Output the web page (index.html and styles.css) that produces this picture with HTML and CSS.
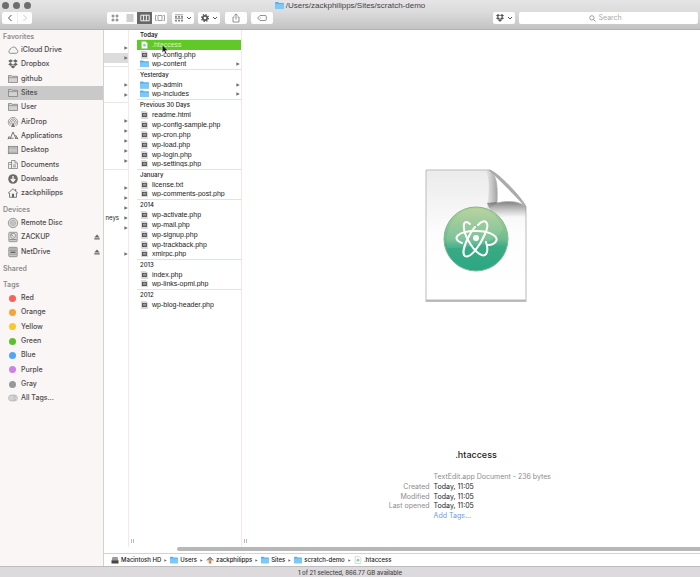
FILE: index.html
```
<!DOCTYPE html>
<html lang="en">
<head>
<meta charset="utf-8">
<title>/Users/zackphilipps/Sites/scratch-demo</title>
<link rel="stylesheet" href="styles.css">
</head>
<body>
<svg class="defs" aria-hidden="true">
  <defs>
    <linearGradient id="g-orb" x1="0" y1="0" x2="0" y2="1"><stop offset="0" stop-color="#b4cf94"/><stop offset=".5" stop-color="#6fbd8e"/><stop offset=".62" stop-color="#3aaa84"/><stop offset="1" stop-color="#2aa783"/></linearGradient>
    <linearGradient id="g-page" x1="0" y1="0" x2="0" y2="1"><stop offset="0" stop-color="#ebebeb"/><stop offset=".5" stop-color="#fdfdfd"/><stop offset="1" stop-color="#fff"/></linearGradient>
    <linearGradient id="g-side" x1="0" y1="0" x2="1" y2="0"><stop offset="0" stop-color="#999" stop-opacity="0"/><stop offset="1" stop-color="#8a8a8a" stop-opacity=".75"/></linearGradient>
    <linearGradient id="g-under" x1="0" y1="0" x2="0" y2="1"><stop offset="0" stop-color="#6e6e6e" stop-opacity=".9"/><stop offset="1" stop-color="#999" stop-opacity="0"/></linearGradient>
    <clipPath id="c-page"><path d="M1 1H64L101 38V131H1Z"/></clipPath>
  </defs>
  <symbol id="folder" viewBox="0 0 10 8"><path d="M0 .6Q0 0 .6 0H3.4L4.4 1H9.4Q10 1 10 1.6V7.4Q10 8 9.4 8H.6Q0 8 0 7.4Z" fill="#55b0ea"/><path d="M0 2.2H10V7.4Q10 8 9.4 8H.6Q0 8 0 7.4Z" fill="#7cc8f8"/></symbol>
  <symbol id="file" viewBox="0 0 8 9"><path d="M.5.5H5.5L7.5 2.500V8.500H.5Z" fill="#fff" stroke="#bbb" stroke-width=".7"/><rect x="1.200" y="2" width="5.500" height="5" fill="#555"/><circle cx="4" cy="4.500" r="1.300" fill="#ddd"/><circle cx="4" cy="4.500" r=".6" fill="#222"/></symbol>
  <symbol id="atomfile" viewBox="0 0 8 9"><path d="M.8.5H5.400L7.200 2.500V8.500H.8Z" fill="#fff" stroke="#c4c4c4" stroke-width=".7"/><circle cx="4" cy="4.800" r="1.600" fill="#8fd0b2"/></symbol>
  <symbol id="cloud" viewBox="0 0 12 12"><path d="M3.200 9.300H9.200A1.900 1.900 0 0 0 9.600 5.600A3 3 0 0 0 4 4.500A1.700 1.700 0 0 0 2.700 6.100A1.700 1.700 0 0 0 3.200 9.300Z" fill="#f4f4f4" stroke="#777" stroke-width=".8"/></symbol>
  <symbol id="dropbox" viewBox="0 0 12 12"><path d="M3.800 1.300L6 3 3.300 4.700 1.200 3ZM8.200 1.300L10.800 3 8.700 4.700 6 3ZM3.300 4.700L6 6.400 3.800 8.100 1.200 6.400ZM8.700 4.700L10.800 6.400 8.200 8.100 6 6.400ZM3.600 8.700L6 7.200 8.400 8.700 6 10.500Z"/></symbol>
  <symbol id="gfolder" viewBox="0 0 12 12"><path d="M1.500 2.500H4.500L5.300 3.300H10.500V9.500H1.500Z" fill="#d2d2d2" stroke="#777" stroke-width=".7"/><path d="M1.500 4.600H10.500" stroke="#777" stroke-width=".6"/></symbol>
  <symbol id="airdrop" viewBox="0 0 12 12"><g fill="none" stroke="#777" stroke-width=".7"><path d="M3.300 10A4.700 4.700 0 1 1 8.700 10M4 8.700A3.200 3.200 0 1 1 8 8.700M4.800 7.500A1.700 1.700 0 1 1 7.200 7.500"/></g><path d="M6 6L8 11H4Z" fill="#777"/></symbol>
  <symbol id="apps" viewBox="0 0 12 12"><path d="M3 9L6 2 9 9M1 8.200H6.500M8.200 8.200H11M2.200 6.200L1 9.200M8.500 5L11 9.200" fill="none" stroke="#666" stroke-width=".9"/></symbol>
  <symbol id="desktop" viewBox="0 0 12 12"><rect x="1.300" y="2.300" width="9.400" height="7.400" fill="#c6c6c6" stroke="#777" stroke-width=".7"/><path d="M2 4H10M2 8.300H10" stroke="#888" stroke-width=".7" stroke-dasharray="1 .6"/></symbol>
  <symbol id="docs" viewBox="0 0 12 12"><g fill="#eee" stroke="#777" stroke-width=".7"><path d="M1.500 3.500H5V9.500H1.500Z"/><path d="M4.500 1.500H8L10.500 4V9.500H4.500Z"/><path d="M8 1.500V4H10.500M6 6H9M6 7.700H9M2.500 5.500H4"/></g></symbol>
  <symbol id="down" viewBox="0 0 12 12"><circle cx="6" cy="6" r="4.800" fill="#6b6b6b"/><path d="M6 3V8M3.800 6L6 8.500 8.200 6" fill="none" stroke="#fff" stroke-width="1.300"/></symbol>
  <symbol id="home" viewBox="0 0 12 12"><path d="M2.500 6V10.300H9.500V6" fill="#eee" stroke="#666" stroke-width=".8"/><path d="M1 6.300L6 1.700 11 6.300M8.700 4V2" fill="none" stroke="#666" stroke-width=".9"/><rect x="5" y="6.800" width="2" height="3.500" fill="#666"/></symbol>
  <symbol id="disc" viewBox="0 0 12 12"><circle cx="6" cy="6" r="4.700" fill="#ddd" stroke="#777" stroke-width=".7"/><circle cx="6" cy="6" r="2.700" fill="none" stroke="#999" stroke-width=".6"/><circle cx="6" cy="6" r="1.200" fill="#fff" stroke="#777" stroke-width=".6"/></symbol>
  <symbol id="drive" viewBox="0 0 12 12"><rect x="1.800" y="1.300" width="8.400" height="9.400" rx=".8" fill="#ddd" stroke="#777" stroke-width=".7"/><circle cx="6" cy="4.800" r="2.500" fill="#eee" stroke="#777" stroke-width=".7"/><path d="M3.500 3L6.500 5.500M2.500 8.700H9.500" stroke="#666" stroke-width=".8"/></symbol>
  <symbol id="net" viewBox="0 0 12 12"><rect x="1.800" y="1.300" width="8.400" height="9.400" rx=".8" fill="#c8c8c8" stroke="#777" stroke-width=".7"/><path d="M2.500 3H9.500M2.500 4.600H9.500M2.500 8.200H9.500" stroke="#888" stroke-width=".7"/><rect x="3.500" y="5.600" width="5" height="1.400" fill="#666"/></symbol>
  <symbol id="alltags" viewBox="0 0 12 12"><circle cx="7.500" cy="6" r="3" fill="#e4e4e4" stroke="#aaa" stroke-width=".6"/><circle cx="6" cy="6" r="3" fill="#e4e4e4" stroke="#aaa" stroke-width=".6"/><circle cx="4.500" cy="6" r="3" fill="#d4d4d4" stroke="#aaa" stroke-width=".6"/></symbol>
  <symbol id="eject" viewBox="0 0 6 6"><path d="M3 .5L5.700 3.500H.3ZM.3 4.300H5.700V5.500H.3Z" fill="#666"/></symbol>
  <symbol id="chev" viewBox="0 0 6 6"><path d="M1 2L3 4 5 2" fill="none" stroke="#555" stroke-width="1"/></symbol>
  <symbol id="tri" viewBox="0 0 4 4"><path d="M.4.2L3.800 2 .4 3.800Z" fill="#707070"/></symbol>
</svg>

<div class="window">
  <header class="chrome">
    <div class="titlebar">
      <div class="lights"><span></span><span></span><span></span></div>
      <h1 class="title"><svg class="ic-folder"><use href="#folder"/></svg>/Users/zackphilipps/Sites/scratch-demo</h1>
    </div>
    <div class="toolbar">
      <div class="group nav">
        <button aria-label="Back"><svg viewBox="0 0 10 10"><path d="M6.500 2L3.500 5 6.500 8" fill="none" stroke="#555" stroke-width="1"/></svg></button>
        <button aria-label="Forward"><svg viewBox="0 0 10 10"><path d="M3.500 2L6.500 5 3.500 8" fill="none" stroke="#ccc" stroke-width="1"/></svg></button>
      </div>
      <div class="group views">
        <button aria-label="Icons"><svg viewBox="0 0 10 10"><path d="M2 2H4V4H2ZM6 2H8V4H6ZM2 6H4V8H2ZM6 6H8V8H6Z" fill="#aaa" stroke="#888" stroke-width=".6"/></svg></button>
        <button aria-label="List"><svg viewBox="0 0 10 10"><path d="M1.500 2H8.500M1.500 4H8.500M1.500 6H8.500M1.500 8H8.500" stroke="#999" stroke-width=".9"/></svg></button>
        <button class="on" aria-label="Columns" aria-pressed="true"><svg viewBox="0 0 10 10"><path d="M.8 2.200H9.200V7.800H.8ZM3.600 2.200V7.800M6.400 2.200V7.800" fill="none" stroke="#fff" stroke-width=".9"/></svg></button>
        <button aria-label="Cover flow"><svg viewBox="0 0 10 10"><path d="M3 2.500H7V7.500H3ZM1.700 2.500H.5V7.500H1.700M8.300 2.500H9.500V7.500H8.300" fill="none" stroke="#888" stroke-width=".8"/></svg></button>
      </div>
      <button class="group drop arrange" aria-label="Arrange"><svg viewBox="0 0 10 10"><path d="M1 1.800H9M1 5.600H9" stroke="#888" stroke-width=".8"/><path d="M1 3H3V4.800H1ZM4 3H6V4.800H4ZM7 3H9V4.800H7ZM1 6.800H3V8.600H1ZM4 6.800H6V8.600H4ZM7 6.800H9V8.600H7Z" fill="#888"/></svg><svg class="ch"><use href="#chev"/></svg></button>
      <button class="group drop" aria-label="Action"><svg viewBox="0 0 10 10"><circle cx="5" cy="5" r="2.200" fill="none" stroke="#555" stroke-width="1.700"/><circle cx="5" cy="5" r="3.500" fill="none" stroke="#555" stroke-width="1.200" stroke-dasharray="1.370 1.370"/></svg><svg class="ch"><use href="#chev"/></svg></button>
      <button class="group single share" aria-label="Share"><svg viewBox="0 0 10 10"><path d="M3.500 4H2V9H8V4H6.500M5 6.500V1M3.300 2.600L5 .9 6.700 2.600" fill="none" stroke="#777" stroke-width=".8"/></svg></button>
      <button class="group single" aria-label="Tags"><svg viewBox="0 0 10 10"><path d="M3 2.500H8.200Q9.300 2.500 9.300 3.600V6.400Q9.300 7.500 8.200 7.500H3L.6 5Z" fill="none" stroke="#777" stroke-width=".8"/><circle cx="3.200" cy="5" r=".5" fill="#777"/></svg></button>
      <button class="group drop dbx" aria-label="Dropbox"><svg viewBox="0 0 12 12"><use href="#dropbox"/></svg><svg class="ch"><use href="#chev"/></svg></button>
      <label class="search"><svg viewBox="0 0 8 8"><circle cx="3.300" cy="3.300" r="2.500" fill="none" stroke="#777" stroke-width=".8"/><path d="M5.200 5.200L7.500 7.500" stroke="#777" stroke-width=".9"/></svg><input type="text" placeholder="Search" aria-label="Search"></label>
    </div>
  </header>

  <div class="body">
    <nav class="sidebar">
      <h2>Favorites</h2>
      <ul>
        <li><a href="#"><svg><use href="#cloud"/></svg>iCloud Drive</a></li>
        <li><a href="#"><svg><use href="#dropbox"/></svg>Dropbox</a></li>
        <li><a href="#"><svg><use href="#gfolder"/></svg>github</a></li>
        <li><a class="current" href="#"><svg><use href="#gfolder"/></svg>Sites</a></li>
        <li><a href="#"><svg><use href="#gfolder"/></svg>User</a></li>
        <li><a href="#"><svg><use href="#airdrop"/></svg>AirDrop</a></li>
        <li><a href="#"><svg><use href="#apps"/></svg>Applications</a></li>
        <li><a href="#"><svg><use href="#desktop"/></svg>Desktop</a></li>
        <li><a href="#"><svg><use href="#docs"/></svg>Documents</a></li>
        <li><a href="#"><svg><use href="#down"/></svg>Downloads</a></li>
        <li><a href="#"><svg><use href="#home"/></svg>zackphilipps</a></li>
      </ul>
      <h2>Devices</h2>
      <ul>
        <li><a href="#"><svg><use href="#disc"/></svg>Remote Disc</a></li>
        <li><a href="#"><svg><use href="#drive"/></svg>ZACKUP</a><button class="eject" aria-label="Eject ZACKUP"><svg><use href="#eject"/></svg></button></li>
        <li><a href="#"><svg><use href="#net"/></svg>NetDrive</a><button class="eject" aria-label="Eject NetDrive"><svg><use href="#eject"/></svg></button></li>
      </ul>
      <h2>Shared</h2>
      <h2>Tags</h2>
      <ul>
        <li><a href="#"><i class="dot red"></i>Red</a></li>
        <li><a href="#"><i class="dot orange"></i>Orange</a></li>
        <li><a href="#"><i class="dot yellow"></i>Yellow</a></li>
        <li><a href="#"><i class="dot green"></i>Green</a></li>
        <li><a href="#"><i class="dot blue"></i>Blue</a></li>
        <li><a href="#"><i class="dot purple"></i>Purple</a></li>
        <li><a href="#"><i class="dot gray"></i>Gray</a></li>
        <li><a href="#"><svg><use href="#alltags"/></svg>All Tags...</a></li>
      </ul>
    </nav>

    <main class="browser">
      <div class="columns">
        <div class="col parent">
          <ul><li><svg><use href="#tri"/></svg></li><li class="current"><svg><use href="#tri"/></svg></li></ul>
          <ul><li><svg><use href="#tri"/></svg></li><li><svg><use href="#tri"/></svg></li></ul>
          <ul><li><svg><use href="#tri"/></svg></li><li><svg><use href="#tri"/></svg></li><li><svg><use href="#tri"/></svg></li><li><svg><use href="#tri"/></svg></li><li><svg><use href="#tri"/></svg></li></ul>
          <ul><li><svg><use href="#tri"/></svg></li><li><svg><use href="#tri"/></svg></li><li><svg><use href="#tri"/></svg></li><li><span>neys</span><svg><use href="#tri"/></svg></li><li><svg><use href="#tri"/></svg></li></ul>
          <ul class="plain"><li><svg><use href="#tri"/></svg></li></ul>
        </div>
        <div class="gutter"><span class="grip"></span></div>
        <div class="col files">
          <section><h3 class="first">Today</h3>
            <a class="selected" href="#"><svg><use href="#atomfile"/></svg>.htaccess<svg class="pointer" viewBox="0 0 8 12"><path d="M1 .8V9.300L3 7.500 4.500 11 6 10.300 4.500 7H7.200Z" fill="#111" stroke="#fff" stroke-width=".5"/></svg></a>
            <a href="#"><svg><use href="#file"/></svg>wp-config.php</a>
            <a href="#"><svg class="fo"><use href="#folder"/></svg>wp-content<svg class="more"><use href="#tri"/></svg></a>
          </section>
          <section><h3>Yesterday</h3>
            <a href="#"><svg class="fo"><use href="#folder"/></svg>wp-admin<svg class="more"><use href="#tri"/></svg></a>
            <a href="#"><svg class="fo"><use href="#folder"/></svg>wp-includes<svg class="more"><use href="#tri"/></svg></a>
          </section>
          <section><h3>Previous 30 Days</h3>
            <a href="#"><svg><use href="#file"/></svg>readme.html</a>
            <a href="#"><svg><use href="#file"/></svg>wp-config-sample.php</a>
            <a href="#"><svg><use href="#file"/></svg>wp-cron.php</a>
            <a href="#"><svg><use href="#file"/></svg>wp-load.php</a>
            <a href="#"><svg><use href="#file"/></svg>wp-login.php</a>
            <a href="#"><svg><use href="#file"/></svg>wp-settings.php</a>
          </section>
          <section><h3>January</h3>
            <a href="#"><svg><use href="#file"/></svg>license.txt</a>
            <a href="#"><svg><use href="#file"/></svg>wp-comments-post.php</a>
          </section>
          <section><h3>2014</h3>
            <a href="#"><svg><use href="#file"/></svg>wp-activate.php</a>
            <a href="#"><svg><use href="#file"/></svg>wp-mail.php</a>
            <a href="#"><svg><use href="#file"/></svg>wp-signup.php</a>
            <a href="#"><svg><use href="#file"/></svg>wp-trackback.php</a>
            <a href="#"><svg><use href="#file"/></svg>xmlrpc.php</a>
          </section>
          <section><h3>2013</h3>
            <a href="#"><svg><use href="#file"/></svg>index.php</a>
            <a href="#"><svg><use href="#file"/></svg>wp-links-opml.php</a>
          </section>
          <section><h3>2012</h3>
            <a href="#"><svg><use href="#file"/></svg>wp-blog-header.php</a>
          </section>
        </div>
        <div class="gutter"><span class="grip"></span></div>
        <article class="preview">
          <div class="art">
            <svg viewBox="0 0 102 133" role="img" aria-label="Document icon">
              <path d="M1 1H64L101 38V131H1Z" fill="url(#g-page)" stroke="#bbb"/>
              <path d="M.5 132H101.500" stroke="#a8a8a8" stroke-width="1.500"/>
              <g clip-path="url(#c-page)">
                <path d="M60 1C66 6 64 36 60 42L72 34V10L64 1Z" fill="url(#g-side)"/>
                <path d="M62 34L72 33C85 31 96 33 101 38V48C92 46 76 50 68 48Z" fill="url(#g-under)"/>
              </g>
              <path d="M64 1C71 6 73 14 72 34C85 31 96 33 101 38L66 2Z" fill="#fff" stroke="#a9a9a9" stroke-width=".8"/>
              <path d="M64 1C72 2 98 30 101 38C96 31 72 8 64 1Z" fill="#aaa" stroke="#aaa"/>
              <circle cx="51" cy="70" r="32" fill="url(#g-orb)" stroke="#7fb896" stroke-width="1"/>
              <path d="M24 60A28 28 0 0 1 78 60Q68 79 22 79Q20 70 24 60Z" fill="#fff" opacity=".1"/>
              <g fill="none" stroke="#fff" stroke-width="2" stroke-linecap="round">
                <path d="M37 74C26 70 32 62 51 62C66 62 78 69 68 75Q66 76 63 76"/>
                <path d="M45 55C36 48 38 62 43 71C50 84 60 91 62 83Q63 79 61 73"/>
                <path d="M53 56C59 49 66 52 60 65C55 77 45 90 40 87C37 85 39 77 43 69Q46 62 50 58"/>
              </g>
              <circle cx="51" cy="69" r="3" fill="#fff"/>
            </svg>
          </div>
          <h2>.htaccess</h2>
          <dl>
            <dt></dt><dd class="kind">TextEdit.app Document - 236 bytes</dd>
            <dt>Created</dt><dd>Today, 11:05</dd>
            <dt>Modified</dt><dd>Today, 11:05</dd>
            <dt>Last opened</dt><dd>Today, 11:05</dd>
            <dt></dt><dd><a href="#">Add Tags...</a></dd>
          </dl>
        </article>
      </div>
      <div class="scroll"><div class="thumb"></div></div>
      <nav class="path" aria-label="Path">
        <a href="#"><svg viewBox="0 0 8 8"><path d="M1.500 1H6.500L7.500 5H.5Z" fill="#999"/><rect x=".5" y="4.500" width="7" height="3" fill="#444"/></svg>Macintosh HD</a><svg class="sep"><use href="#tri"/></svg>
        <a href="#"><svg><use href="#folder"/></svg>Users</a><svg class="sep"><use href="#tri"/></svg>
        <a href="#"><svg viewBox="0 0 8 8"><path d="M1.500 4V7.500H6.500V4" fill="#e8dcc8"/><path d="M.5 4.300L4 1 7.500 4.300" fill="#999" stroke="#777" stroke-width=".8"/><rect x="3.200" y="4.500" width="1.800" height="3" fill="#e0782c"/></svg>zackphilipps</a><svg class="sep"><use href="#tri"/></svg>
        <a href="#"><svg><use href="#folder"/></svg>Sites</a><svg class="sep"><use href="#tri"/></svg>
        <a href="#"><svg><use href="#folder"/></svg>scratch-demo</a><svg class="sep"><use href="#tri"/></svg>
        <a href="#"><svg><use href="#atomfile"/></svg>.htaccess</a>
      </nav>
    </main>
  </div>
  <footer class="status">1 of 21 selected, 866.77 GB available</footer>
</div>
</body>
</html>
```
FILE: styles.css
```
* { box-sizing: border-box; }
body, h1, h2, h3, ul, dl, dd { margin: 0; padding: 0; }
body {
  font: 7px/10px Inter, "Liberation Sans", sans-serif;
  color: #222;
  background: #fff;
}
ul { list-style: none; }
a { color: inherit; text-decoration: none; }
button { border: 0; padding: 0; margin: 0; background: none; }
svg { display: block; flex: none; }
.defs { position: absolute; width: 0; height: 0; }

.window { display: flex; flex-direction: column; min-height: 100vh; }

/* Title bar and toolbar */
.chrome {
  height: 30px;
  background: linear-gradient(#e6e4e6, #dcdcdc 40%, #c3c3c3);
  border-bottom: 1px solid #b2b2b2;
}
.titlebar { position: relative; height: 11px; display: flex; justify-content: center; }
.lights { position: absolute; left: 2px; top: 2px; display: flex; gap: 4px; }
.lights span { width: 7px; height: 7px; border-radius: 50%; background: #6d6d6d; }
.title { display: flex; align-items: center; gap: 2px; font: 400 8px/11px "Liberation Sans", sans-serif; color: #444; }
.ic-folder { width: 9px; height: 7px; }
.toolbar { display: flex; align-items: center; padding: 1px 2px 0; }
.toolbar svg { width: 10px; height: 10px; }
.toolbar svg.ch { width: 6px; height: 6px; }
.group { display: flex; height: 12px; background: #fdfdfd; border-radius: 2px; align-items: center; justify-content: center; overflow: hidden; }
.nav button, .views button { height: 12px; display: flex; align-items: center; justify-content: center; }
.nav button { width: 15px; }
.nav button + button { border-left: 1px solid #eee; }
.views { margin-left: 75px; }
.views button { width: 15px; }
.views .on { background: #686868; }
.drop { width: 22px; gap: 2px; }
.arrange { margin-left: 5px; margin-right: 4px; }
.single { width: 22px; margin-right: 4px; }
.share { margin-left: 5px; }
.dbx { margin-left: auto; color: #555; fill: #555; }
.search { display: flex; align-items: center; justify-content: center; gap: 3px; width: 179px; height: 12px; margin-left: 4px; background: #fff; border-radius: 2px; }
.toolbar .search svg { width: 7px; height: 7px; }
.search input { width: 30px; height: 10px; border: 0; padding: 0; background: none; font: inherit; outline: 0; }
.search input::placeholder { color: #aaa; }

.body { flex: 1; display: flex; }

/* Sidebar */
.sidebar { width: 104px; background: #faf6f6; border-right: 1px solid #cfd4cd; color: #4a4a4a; font-weight: 500; }
.sidebar h2 { margin-top: 3px; padding-left: 3px; font-size: 7px; font-weight: 600; line-height: 13px; color: #8d8d8d; }
.sidebar h2:first-child { margin-top: 0; }
.sidebar ul { display: grid; grid-auto-rows: 14px 14px 15px; }
.sidebar li { display: flex; }
.sidebar a { flex: 1; display: flex; align-items: center; gap: 2px; padding-left: 7px; }
.sidebar a svg { width: 12px; height: 12px; fill: #666; }
.sidebar .current { background: #c9c9c9; }
.eject { width: 6px; margin-right: 3px; display: flex; align-items: center; }
.eject svg { width: 6px; height: 6px; }
.dot { width: 7px; height: 7px; margin: 0 3px 0 2px; border-radius: 50%; }
.red { background: #fb605a; }
.orange { background: #f9a334; }
.yellow { background: #f7c92b; }
.green { background: #5fbd2e; }
.blue { background: #53a6f5; }
.purple { background: #cc82e6; }
.gray { background: #98989c; }

/* Column view */
.browser { flex: 1; display: flex; flex-direction: column; min-width: 0; }
.columns { flex: 1; display: flex; }
.parent { width: 25px; border-right: 1px solid #f4e8e8; }
.parent ul { padding: 13px 0 3px; border-bottom: 1px solid #ece6e6; }
.parent ul:nth-child(2) { padding-bottom: 2px; }
.parent ul:nth-child(4) { padding: 13px 0 0; border-bottom: 0; }
.parent .plain { padding-top: 16px; border-bottom: 0; }
.parent li { height: 10px; display: flex; justify-content: flex-end; align-items: center; gap: 5px; font-size: 6px; }
.parent svg { width: 4px; height: 4px; }
.parent .current { background: #dcdcdc; }
.gutter { width: 8px; display: flex; align-items: flex-end; padding: 0 0 4px 2px; }
.grip { width: 3px; height: 4px; border: solid #bbb; border-width: 0 1px; }

.files { width: 105px; border-right: 1px solid #f6e6e6; font-family: "Liberation Sans", sans-serif; }
.files section + section { border-top: 1px solid #e6e0e0; }
.files h3 { padding-left: 3px; font: 500 6px/9px Inter, sans-serif; height: 10px; }
.files h3.first { font-weight: 600; border-bottom: 1px solid #eee; }
.files a { display: flex; align-items: center; gap: 3px; height: 10px; padding: 0 1px 0 3px; }
.files a:last-child:not(:nth-child(2)) { height: 7px; margin-bottom: 2px; line-height: 8px; overflow: hidden; }
.files a svg { width: 9px; height: 8px; }
.files a .more { width: 4px; height: 4px; margin-left: auto; }
.files .selected { position: relative; background: #61c927; color: #d4f5bd; }
.files .selected .pointer { position: absolute; left: 24px; top: 4px; width: 8px; height: 11px; z-index: 1; }

/* Preview */
.preview { flex: 1; display: flex; flex-direction: column; padding: 0 0 26px 2px; }
.art { flex: 1; display: flex; align-items: center; justify-content: center; }
.art svg { width: 102px; height: 133px; }
.preview h2 { font-size: 9px; font-weight: 500; line-height: 12px; text-align: center; margin: 8px 0 11px; }
.preview dl { display: grid; grid-template-columns: 2fr 3fr; grid-auto-rows: 10px 10px 9px; column-gap: 4px; }
.preview dt { text-align: right; color: #8c8c8c; }
.preview dd { white-space: nowrap; }
.preview .kind { color: #8c8c8c; }
.preview dd a { color: #6c9be6; }

.scroll { height: 6px; padding-left: 73px; }
.thumb { height: 4px; background: #b7b7b7; border-radius: 2px 0 0 2px; }
.path { display: flex; align-items: center; height: 13px; padding-left: 7px; border-top: 1px solid #d9d0d0; }
.path a { display: flex; align-items: center; gap: 2px; font-size: 6px; font-weight: 500; }
.path a svg { width: 8px; height: 8px; }
.path .sep { width: 3px; height: 3px; margin: 0 3px; }

.status { height: 11px; border-top: 1px solid #bdbdbd; background: #dddadd; color: #444; font-size: 6px; font-weight: 500; line-height: 11px; text-align: center; }
```
